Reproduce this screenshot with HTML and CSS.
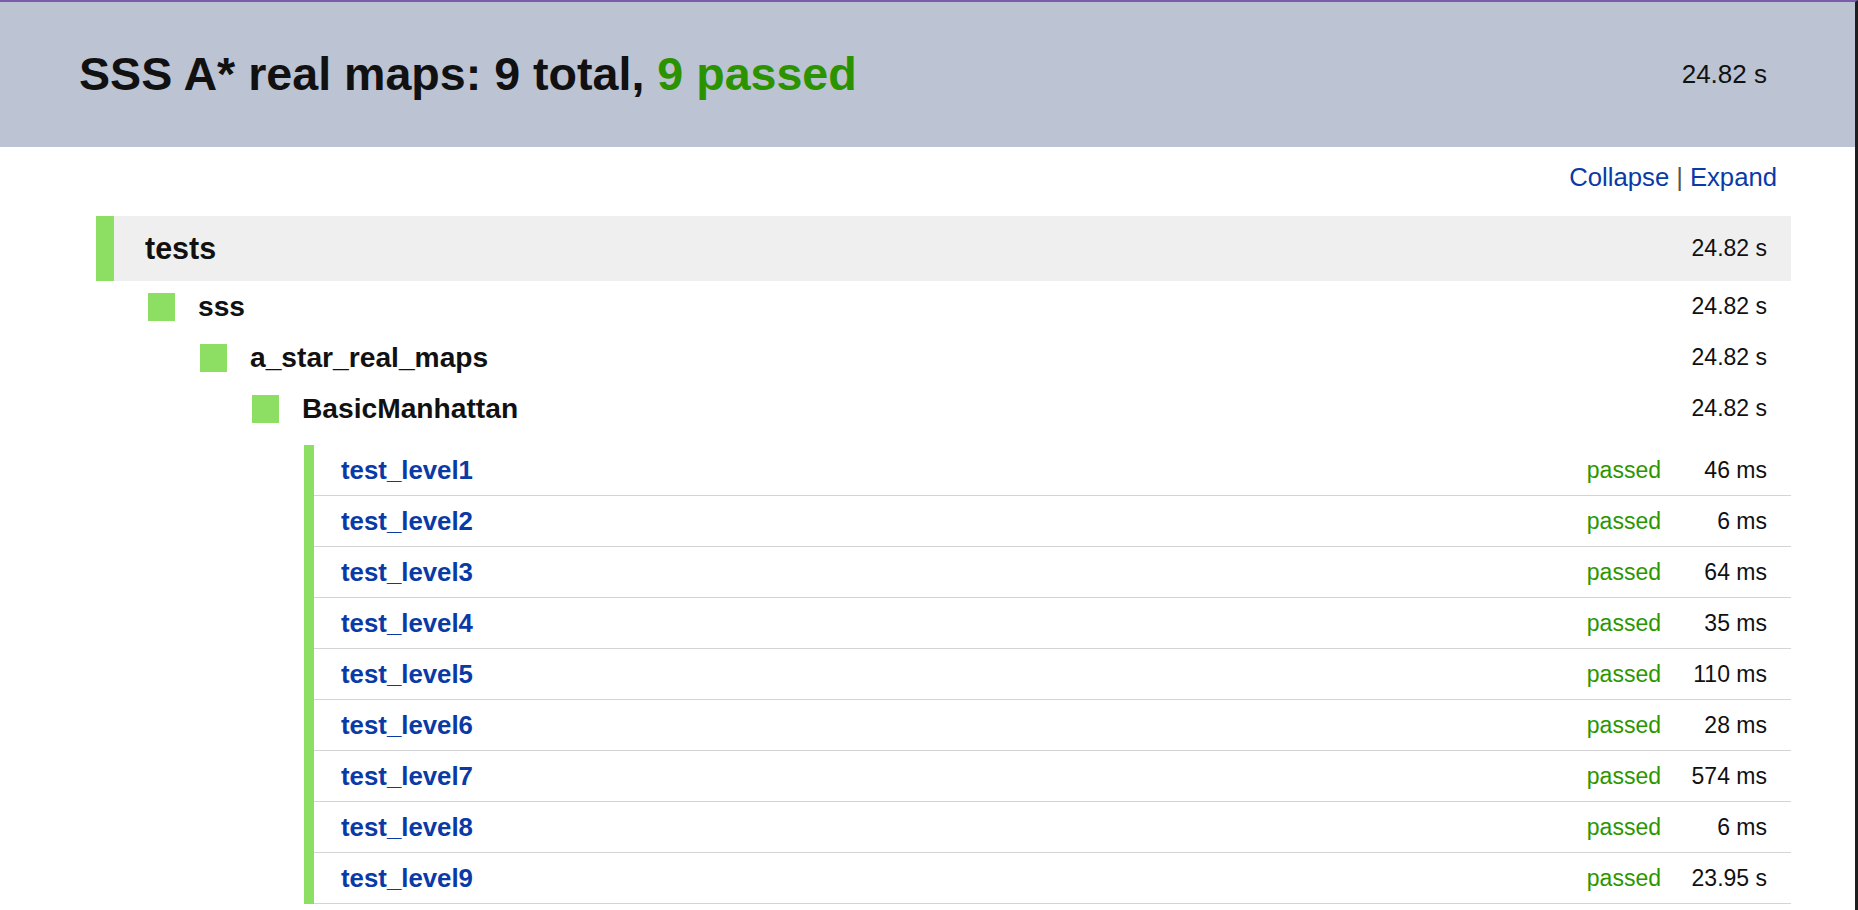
FILE: index.html
```html
<!DOCTYPE html>
<html lang="en">
<head>
<meta charset="utf-8">
<title>SSS A* real maps</title>
<link rel="stylesheet" href="styles.css">
</head>
<body>
<div class="page">
  <header class="summary">
    <h1 class="title">SSS A* real maps: 9 total, <span class="ok">9 passed</span></h1>
    <span class="summary-time">24.82 s</span>
  </header>

  <div class="controls">
    <a class="ctl">Collapse</a><span class="sep">|</span><a class="ctl">Expand</a>
  </div>

  <div class="tree">
    <div class="root-row">
      <span class="root-name">tests</span>
      <span class="time">24.82 s</span>
    </div>
    <div class="group">
      <div class="node-row">
        <span class="square"></span><span class="node-name">sss</span>
        <span class="time">24.82 s</span>
      </div>
      <div class="group">
        <div class="node-row">
          <span class="square"></span><span class="node-name">a_star_real_maps</span>
          <span class="time">24.82 s</span>
        </div>
        <div class="group">
          <div class="node-row">
            <span class="square"></span><span class="node-name">BasicManhattan</span>
            <span class="time">24.82 s</span>
          </div>
          <div class="group">
            <div class="tests">
              <div class="test-row"><a class="test-name">test_level1</a><span class="status">passed</span><span class="test-time">46 ms</span></div>
              <div class="test-row"><a class="test-name">test_level2</a><span class="status">passed</span><span class="test-time">6 ms</span></div>
              <div class="test-row"><a class="test-name">test_level3</a><span class="status">passed</span><span class="test-time">64 ms</span></div>
              <div class="test-row"><a class="test-name">test_level4</a><span class="status">passed</span><span class="test-time">35 ms</span></div>
              <div class="test-row"><a class="test-name">test_level5</a><span class="status">passed</span><span class="test-time">110 ms</span></div>
              <div class="test-row"><a class="test-name">test_level6</a><span class="status">passed</span><span class="test-time">28 ms</span></div>
              <div class="test-row"><a class="test-name">test_level7</a><span class="status">passed</span><span class="test-time">574 ms</span></div>
              <div class="test-row"><a class="test-name">test_level8</a><span class="status">passed</span><span class="test-time">6 ms</span></div>
              <div class="test-row"><a class="test-name">test_level9</a><span class="status">passed</span><span class="test-time">23.95 s</span></div>
            </div>
          </div>
        </div>
      </div>
    </div>
  </div>
</div>
</body>
</html>
```
FILE: styles.css
```css
html, body {
  margin: 0;
  padding: 0;
  overflow: hidden;
  background: #ffffff;
}

body {
  font-family: "Liberation Sans", Arial, Helvetica, sans-serif;
  color: #111111;
}

.page {
  height: 100vh;
  box-sizing: border-box;
  border-top: 2px solid #7b5cab;
  border-right: 3px solid #1e1e1e;
}

.summary {
  display: flex;
  align-items: center;
  justify-content: space-between;
  height: 145px;
  padding: 0 88px 0 79px;
  background: #bcc3d3;
}

.title {
  margin: 0;
  font-size: 46.6px;
  font-weight: bold;
  color: #111111;
  line-height: 1.15;
}

.ok {
  color: #2b9200;
}

.summary-time {
  font-size: 26px;
  color: #111111;
}

.controls {
  display: flex;
  justify-content: flex-end;
  align-items: center;
  padding: 15px 78px 0 0;
  margin-bottom: 24px;
  height: 30px;
  font-size: 25.7px;
  line-height: 30px;
}

.ctl {
  color: #0a3aa6;
  cursor: pointer;
}

.sep {
  color: #555555;
  margin: 0 7px;
}

.tree {
  margin: 0 64px 0 96px;
}

.root-row {
  display: flex;
  align-items: center;
  height: 65px;
  background: #efefef;
  border-left: 18px solid #8cdf62;
  padding: 0 24px 0 31px;
}

.root-name {
  font-size: 30.5px;
  font-weight: bold;
}

.time {
  margin-left: auto;
  font-size: 23px;
  color: #111111;
}

.group {
  padding-left: 52px;
}

.node-row {
  display: flex;
  align-items: center;
  height: 51px;
  padding-right: 24px;
}

.square {
  width: 27px;
  height: 28px;
  background: #8cdf62;
  margin-right: 23px;
  flex: none;
}

.node-name {
  font-size: 28.2px;
  font-weight: bold;
}

.tests {
  margin-top: 11px;
  border-left: 10px solid #8cdf62;
}

.test-row {
  display: flex;
  align-items: center;
  height: 50px;
  border-bottom: 1px solid #d4d4d4;
  padding: 0 24px 0 27px;
}

.test-name {
  font-size: 25.8px;
  font-weight: bold;
  color: #0a3aa6;
  cursor: pointer;
}

.status {
  margin-left: auto;
  font-size: 23px;
  color: #2b9700;
}

.test-time {
  width: 106px;
  text-align: right;
  font-size: 23px;
  color: #111111;
}
```
